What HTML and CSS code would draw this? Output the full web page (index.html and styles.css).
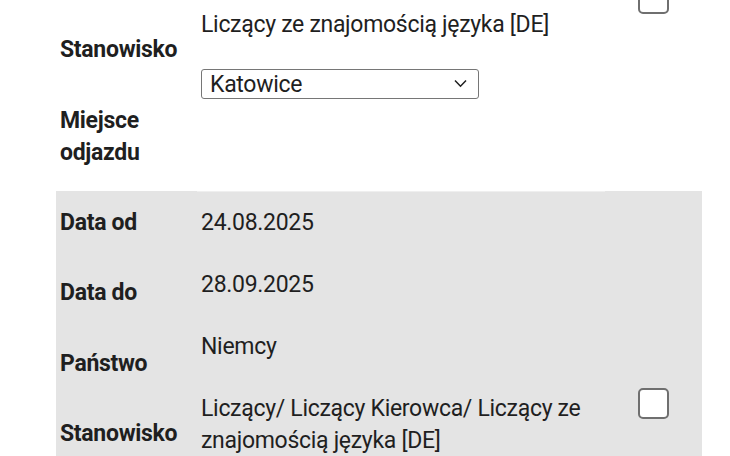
FILE: index.html
```html
<!DOCTYPE html>
<html lang="pl">
  <head>
    <meta charset="UTF-8" />
    <meta name="viewport" content="width=device-width, initial-scale=1.0" />
    <title>Oferty pracy</title>
    <link rel="stylesheet" href="styles.css">
  </head>
  <body>
    <div class="offers">
      <div class="offer">
        <div class="labels">
          <div class="label">Data od</div>
          <div class="label">Data do</div>
          <div class="label">Państwo</div>
          <div class="label">Stanowisko</div>
          <div class="label">Miejsce odjazdu</div>
        </div>
        <div class="values">
          <div class="value">27.07.2025</div>
          <div class="value">24.08.2025</div>
          <div class="value">Niemcy</div>
          <div class="value">Liczący ze znajomością języka [DE]</div>
          <div class="value value-select">
            <div class="select-wrap">
              <select class="select">
                <option>Katowice</option>
                <option>Kraków</option>
                <option>Wrocław</option>
              </select>
              <svg class="chevron" width="13" height="9" viewBox="0 0 13 9">
                <path d="M1 1.5 L6.5 7.2 L12 1.5" fill="none" stroke="#1f1f1f" stroke-width="1.5" />
              </svg>
            </div>
          </div>
        </div>
        <div class="pick">
          <input type="checkbox" class="check" />
        </div>
      </div>

      <div class="offer offer-alt">
        <div class="labels">
          <div class="label">Data od</div>
          <div class="label">Data do</div>
          <div class="label">Państwo</div>
          <div class="label">Stanowisko</div>
          <div class="label">Miejsce odjazdu</div>
        </div>
        <div class="values">
          <div class="value">24.08.2025</div>
          <div class="value">28.09.2025</div>
          <div class="value">Niemcy</div>
          <div class="value">Liczący/ Liczący Kierowca/ Liczący ze znajomością języka [DE]</div>
          <div class="value value-select">
            <div class="select-wrap">
              <select class="select">
                <option>Katowice</option>
                <option>Kraków</option>
                <option>Wrocław</option>
              </select>
              <svg class="chevron" width="13" height="9" viewBox="0 0 13 9">
                <path d="M1 1.5 L6.5 7.2 L12 1.5" fill="none" stroke="#1f1f1f" stroke-width="1.5" />
              </svg>
            </div>
          </div>
        </div>
        <div class="pick">
          <input type="checkbox" class="check" />
        </div>
      </div>
    </div>
  </body>
</html>
```

FILE: styles.css
```css
* {
  margin: 0;
  padding: 0;
  box-sizing: border-box;
}

body {
  font-family: Roboto, "Noto Sans", sans-serif;
  font-size: 23px;
  line-height: 32px;
  letter-spacing: -0.3px;
  color: #1f1f1f;
  background-color: #fff;
  overflow: hidden;
}

/* the list is scrolled: first offer starts above the window */
.offers {
  width: 646px;
  margin: -193px 0 0 56px;
}

.offer {
  display: grid;
  grid-template-columns: 141px 408px 1fr;
}

.offer-alt {
  background-color: #e4e4e4;
  min-height: 426px;
}

.offer-alt .values {
  box-shadow: inset 0 1px #efefef;
}

.label {
  font-weight: 700;
  padding: 16px 4px 22.4px;
}

.value {
  padding: 16px 4px 14px;
}

.value-select {
  padding-top: 14px;
}

.select-wrap {
  position: relative;
  width: 278px;
}

.select {
  display: block;
  width: 100%;
  height: 30px;
  padding: 0 30px 0 8px;
  font-family: inherit;
  font-size: 23px;
  letter-spacing: -0.3px;
  color: #1f1f1f;
  background-color: #fff;
  border: 1px solid #767676;
  border-radius: 3px;
  appearance: none;
  -webkit-appearance: none;
}

.chevron {
  position: absolute;
  right: 12px;
  top: 10px;
  pointer-events: none;
}

.pick {
  display: flex;
  justify-content: center;
  align-self: center;
}

.check {
  width: 31px;
  height: 31px;
  appearance: none;
  -webkit-appearance: none;
  background-color: #fff;
  border: 2px solid #6f6f6f;
  border-radius: 5px;
}
```
